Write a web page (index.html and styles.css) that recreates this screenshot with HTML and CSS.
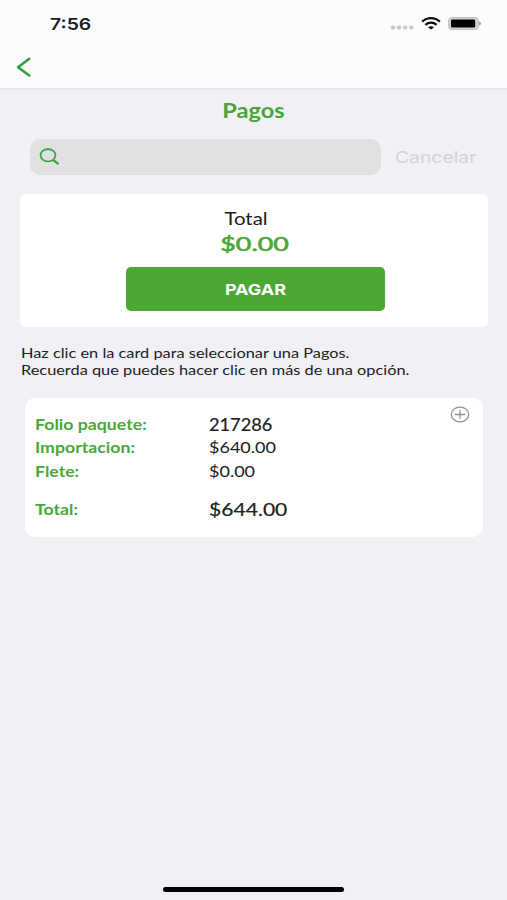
FILE: index.html
```html
<!DOCTYPE html>
<html lang="es">
<head>
<meta charset="utf-8">
<title>Pagos</title>
<link rel="stylesheet" href="styles.css">
</head>
<body>
<header class="top">
  <div class="status">
    <span class="time wide">7:56</span>
    <div class="indicators">
      <svg class="dots" width="24" height="5" viewBox="0 0 24 5" fill="#c9c9cc"><rect x="0.8" y="0.5" width="4.4" height="4" rx="1.8"/><rect x="6.9" y="0.5" width="4.4" height="4" rx="1.8"/><rect x="13" y="0.5" width="4.4" height="4" rx="1.8"/><rect x="19.1" y="0.5" width="4.4" height="4" rx="1.8"/></svg>
      <svg class="wifi" width="20" height="13" viewBox="0 0 20 13" fill="none" stroke="#111" stroke-width="2.3"><path d="M1.1 4.6C6.2-.1 13.8-.1 18.9 4.6"/><path d="M4.4 7.8C7.6 4.9 12.4 4.9 15.6 7.8"/><path d="M10 12.6 7 10.2C8.7 8.8 11.3 8.8 13 10.2Z" fill="#111" stroke="none"/></svg>
      <svg class="battery" width="33" height="13" viewBox="0 0 33 13"><rect x="0.6" y="0.7" width="29.8" height="11.8" rx="3.6" fill="#d4d4d4" stroke="#c2c2c2" stroke-width="1.2"/><rect x="3" y="2.6" width="24.2" height="8" rx="1.4" fill="#000"/><path d="M31.2 4.6q1.8.5 1.8 2t-1.8 2z" fill="#999"/></svg>
    </div>
  </div>
  <svg class="back" width="16" height="21" viewBox="0 0 16 21" fill="none" stroke="#2f9e3a" stroke-width="2.5" stroke-linecap="round" stroke-linejoin="round"><path d="M13.3 1.8 2 10.3 13.3 18.6"/></svg>
</header>
<main>
  <h1><span class="wide">Pagos</span></h1>
  <div class="search">
    <div class="field">
      <svg width="22" height="18" viewBox="0 0 22 18" fill="none" stroke="#3aa145"><ellipse cx="9" cy="7.3" rx="7.5" ry="6.2" stroke-width="1.6"/><path d="M14 11.8 19.6 16.2" stroke-width="2.2"/></svg>
    </div>
    <span class="cancel wide">Cancelar</span>
  </div>
  <section class="summary">
    <div class="label"><span class="wide">Total</span></div>
    <div class="amount"><span class="wide">$0.00</span></div>
    <button class="pay"><span class="wide">PAGAR</span></button>
  </section>
  <p class="hint"><span class="wide">Haz clic en la card para seleccionar una Pagos.</span><br><span class="wide">Recuerda que puedes hacer clic en más de una opción.</span></p>
  <section class="package">
    <dl>
      <dt><span class="wide">Folio paquete:</span></dt><dd class="big folio"><span class="wide">217286</span></dd>
      <dt><span class="wide">Importacion:</span></dt><dd><span class="wide">$640.00</span></dd>
      <dt><span class="wide">Flete:</span></dt><dd><span class="wide">$0.00</span></dd>
      <dt class="sum"><span class="wide">Total:</span></dt><dd class="big sum"><span class="wide">$644.00</span></dd>
    </dl>
    <svg class="add" width="20" height="17" viewBox="0 0 20 17" fill="none" stroke="#929292"><ellipse cx="10" cy="8.5" rx="8.7" ry="7.3" stroke-width="1.3"/><path d="M4.8 8.5H15.2M10 4.2V12.8" stroke-width="1.3"/></svg>
  </section>
</main>
<footer><div class="home"></div></footer>
</body>
</html>
```
FILE: styles.css
```css
* { box-sizing: border-box; margin: 0; padding: 0; }
body {
  height: 900px;
  display: flex;
  flex-direction: column;
  background: #f0f0f5;
  color: #202022;
  font-family: Lato, "Noto Sans", sans-serif;
  overflow: hidden;
}
.wide {
  display: inline-block;
  white-space: nowrap;
  transform: scaleX(var(--stretch, 1.2));
  transform-origin: left;
}
.top { height: 90px; background: #fcfcfe; border-bottom: 2px solid #e7e7e9; }
.status { display: flex; justify-content: space-between; height: 48px; padding: 0 26px 0 50px; }
.time { --stretch: 1.17; font: 600 16.5px/48px Inter, sans-serif; color: #1c1c1e; }
.indicators { display: flex; align-items: flex-start; padding-top: 17px; }
.dots { margin: 8px 7px 0 0; }
.wifi { margin-right: 7px; }
.back { display: block; margin: 9px 0 0 16px; }
main { flex: 1; }
h1 { --stretch: 1.18; height: 49px; text-align: center; font-size: 20px; font-weight: 700; line-height: 41px; color: #4ba33a; }
h1 .wide, .summary .wide { transform-origin: center; }
.search { display: flex; align-items: center; height: 36px; padding-left: 30px; }
.field { width: 351px; height: 36px; padding: 9px 0 0 9px; margin-right: 14px; border-radius: 10px; background: #e1e1e2; }
.field svg { display: block; }
.cancel { --stretch: 1.17; font: 400 16.5px/34px Inter, sans-serif; color: #d3d3d8; }
.summary { height: 133px; margin: 19px 19px 0 20px; padding-top: 13px; border-radius: 6px; background: #fff; text-align: center; }
.label { font-size: 17px; line-height: 24px; padding-right: 16px; }
.amount { --stretch: 1.34; height: 36px; padding-left: 2px; font-size: 20px; font-weight: 400; line-height: 24px; color: #4ba735; -webkit-text-stroke: 0.6px #4ba735; }
.pay { display: block; width: 259px; height: 44px; margin: 0 0 0 106px; border: 0; border-radius: 5px; background: #4ca735; color: #fff; font: 700 15px/45px Inter, sans-serif; }
.hint { --stretch: 1.167; margin: 17px 0 0 21px; font-size: 14px; line-height: 17px; height: 37px; }
.package { display: flex; justify-content: space-between; height: 139px; margin: 17px 24px 0 25px; padding: 14px 13px 0 10px; border-radius: 10px; background: #fff; }
dl { display: grid; grid-template-columns: 174px auto; grid-template-rows: 23px 24px 24px 52px; }
dt, dd { font-size: 15px; line-height: 24px; }
dt { --stretch: 1.18; font-weight: 700; color: #4ba735; }
dd { --stretch: 1.2; color: #202022; }
.big { --stretch: 1.24; font-size: 17px; line-height: 25px; -webkit-text-stroke: 0.2px #202022; }
.folio { --stretch: 1.07; }
.sum { padding-top: 14px; }
.add { margin-top: -6px; }
footer { height: 16px; }
.home { width: 181px; height: 5px; margin: 3px 0 0 163px; border-radius: 3px; background: #000; }
```
